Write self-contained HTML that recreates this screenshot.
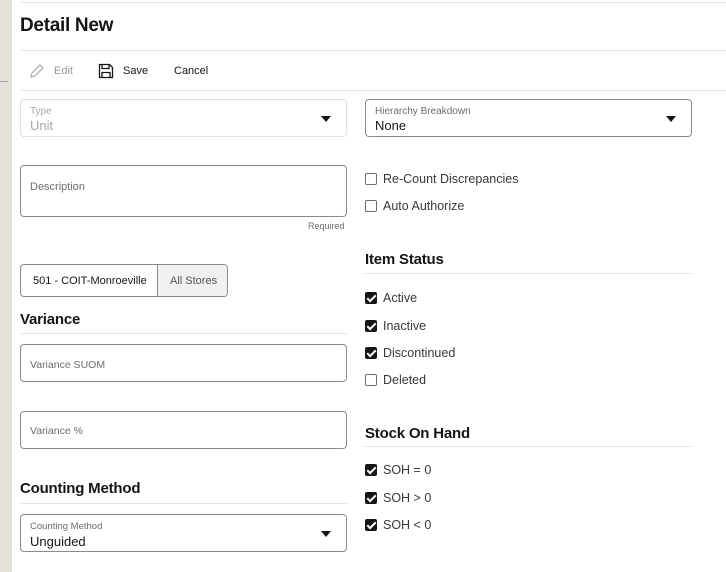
<!DOCTYPE html>
<html><head><style>
*{box-sizing:border-box;margin:0;padding:0}
body{width:726px;height:572px;background:#fff;font-family:"Liberation Sans",sans-serif;color:#161513;position:relative;overflow:hidden}
.a{position:absolute}
.side{left:0;top:0;width:12px;height:572px;background:#e5e2dc}
.line{height:1px;background:#e4e3e1}
.field{border:1px solid #8d8b88;border-radius:4px;background:#fff}
.lab{font-size:10px;color:#6f6c69}
.val{font-size:13px;color:#161513}
h2{position:absolute;font-size:15px;font-weight:bold;letter-spacing:-0.2px}
.cb{position:absolute;width:12px;height:12px;border:1.5px solid #6f6c69;border-radius:2px;background:#fff}
.cb.on{background:#161513;border-color:#161513}
.cb.on::after{content:"";position:absolute;left:3px;top:0px;width:3px;height:7px;border:solid #fff;border-width:0 2px 2px 0;transform:rotate(45deg)}
.ct{position:absolute;font-size:12.5px;color:#3a3835}
.arr{position:absolute;width:0;height:0;border-left:5px solid transparent;border-right:5px solid transparent;border-top:6px solid #161513}
</style></head><body>
<div class="a side"></div>
<div class="a" style="left:0;top:81px;width:8px;height:1px;background:#aaa"></div>
<div class="a line" style="left:20px;top:2px;width:706px"></div>
<div class="a" style="left:20px;top:15px;font-size:19px;font-weight:bold;letter-spacing:-0.3px">Detail New</div>
<div class="a line" style="left:20px;top:50px;width:706px"></div>
<svg class="a" style="left:29px;top:63px" width="16" height="16" viewBox="0 0 16 16"><path d="M2 14l1-4 8-8 3 3-8 8z" fill="none" stroke="#aaa" stroke-width="1.2"/></svg>
<div class="a" style="left:54px;top:65px;font-size:11px;color:#999">Edit</div>
<svg class="a" style="left:98px;top:63px" width="16" height="16" viewBox="0 0 16 16"><path d="M1.5 1.5h10l3 3v10h-13z M4 1.5v4h7v-4 M4 14.5v-5h8v5" fill="none" stroke="#161513" stroke-width="1.3"/></svg>
<div class="a" style="left:123px;top:65px;font-size:11px">Save</div>
<div class="a" style="left:174px;top:65px;font-size:11px">Cancel</div>
<div class="a line" style="left:20px;top:90px;width:706px"></div>

<div class="a field" style="left:20px;top:99px;width:327px;height:38px;border-color:#e0dfdd">
<div class="a lab" style="left:9px;top:6px;color:#a9a7a4">Type</div>
<div class="a val" style="left:9px;top:18px;color:#a9a7a4">Unit</div></div>
<div class="arr" style="left:321px;top:116px"></div>
<div class="a field" style="left:365px;top:99px;width:327px;height:38px">
<div class="a lab" style="left:9px;top:6px">Hierarchy Breakdown</div>
<div class="a val" style="left:9px;top:18px">None</div></div>
<div class="arr" style="left:666px;top:116px"></div>

<div class="a field" style="left:20px;top:165px;width:327px;height:52px">
<div class="a lab" style="left:9px;top:15px;font-size:11px">Description</div></div>
<div class="a lab" style="left:308px;top:221px;font-size:9px">Required</div>

<div class="cb" style="left:365px;top:173px"></div><div class="ct" style="left:383px;top:172px">Re-Count Discrepancies</div>
<div class="cb" style="left:365px;top:200px"></div><div class="ct" style="left:383px;top:199px">Auto Authorize</div>

<h2 style="left:365px;top:251px">Item Status</h2>
<div class="a line" style="left:365px;top:273px;width:327px"></div>
<div class="cb on" style="left:365px;top:292px"></div><div class="ct" style="left:383px;top:291px">Active</div>
<div class="cb on" style="left:365px;top:320px"></div><div class="ct" style="left:383px;top:319px">Inactive</div>
<div class="cb on" style="left:365px;top:347px"></div><div class="ct" style="left:383px;top:346px">Discontinued</div>
<div class="cb" style="left:365px;top:374px"></div><div class="ct" style="left:383px;top:373px">Deleted</div>

<h2 style="left:365px;top:425px">Stock On Hand</h2>
<div class="a line" style="left:365px;top:446px;width:327px"></div>
<div class="cb on" style="left:365px;top:464px"></div><div class="ct" style="left:383px;top:463px">SOH = 0</div>
<div class="cb on" style="left:365px;top:492px"></div><div class="ct" style="left:383px;top:491px">SOH &gt; 0</div>
<div class="cb on" style="left:365px;top:519px"></div><div class="ct" style="left:383px;top:518px">SOH &lt; 0</div>

<div class="a field" style="left:20px;top:264px;width:208px;height:33px;overflow:hidden">
<div class="a" style="left:136px;top:0;width:72px;height:33px;background:#f1f0ef;border-left:1px solid #8d8b88"></div>
<div class="a" style="left:12px;top:10px;font-size:11px">501 - COIT-Monroeville</div>
<div class="a" style="left:149px;top:10px;font-size:11px;color:#555">All Stores</div></div>

<h2 style="left:20px;top:311px">Variance</h2>
<div class="a line" style="left:20px;top:333px;width:327px"></div>
<div class="a field" style="left:20px;top:344px;width:327px;height:38px">
<div class="a lab" style="left:9px;top:14px;font-size:10.5px">Variance SUOM</div></div>
<div class="a field" style="left:20px;top:411px;width:327px;height:38px">
<div class="a lab" style="left:9px;top:13px;font-size:10.5px">Variance %</div></div>

<h2 style="left:20px;top:480px">Counting Method</h2>
<div class="a line" style="left:20px;top:503px;width:327px"></div>
<div class="a field" style="left:20px;top:514px;width:327px;height:38px">
<div class="a lab" style="left:9px;top:6px;font-size:9.5px">Counting Method</div>
<div class="a val" style="left:9px;top:19px">Unguided</div></div>
<div class="arr" style="left:321px;top:531px"></div>
</body></html>
